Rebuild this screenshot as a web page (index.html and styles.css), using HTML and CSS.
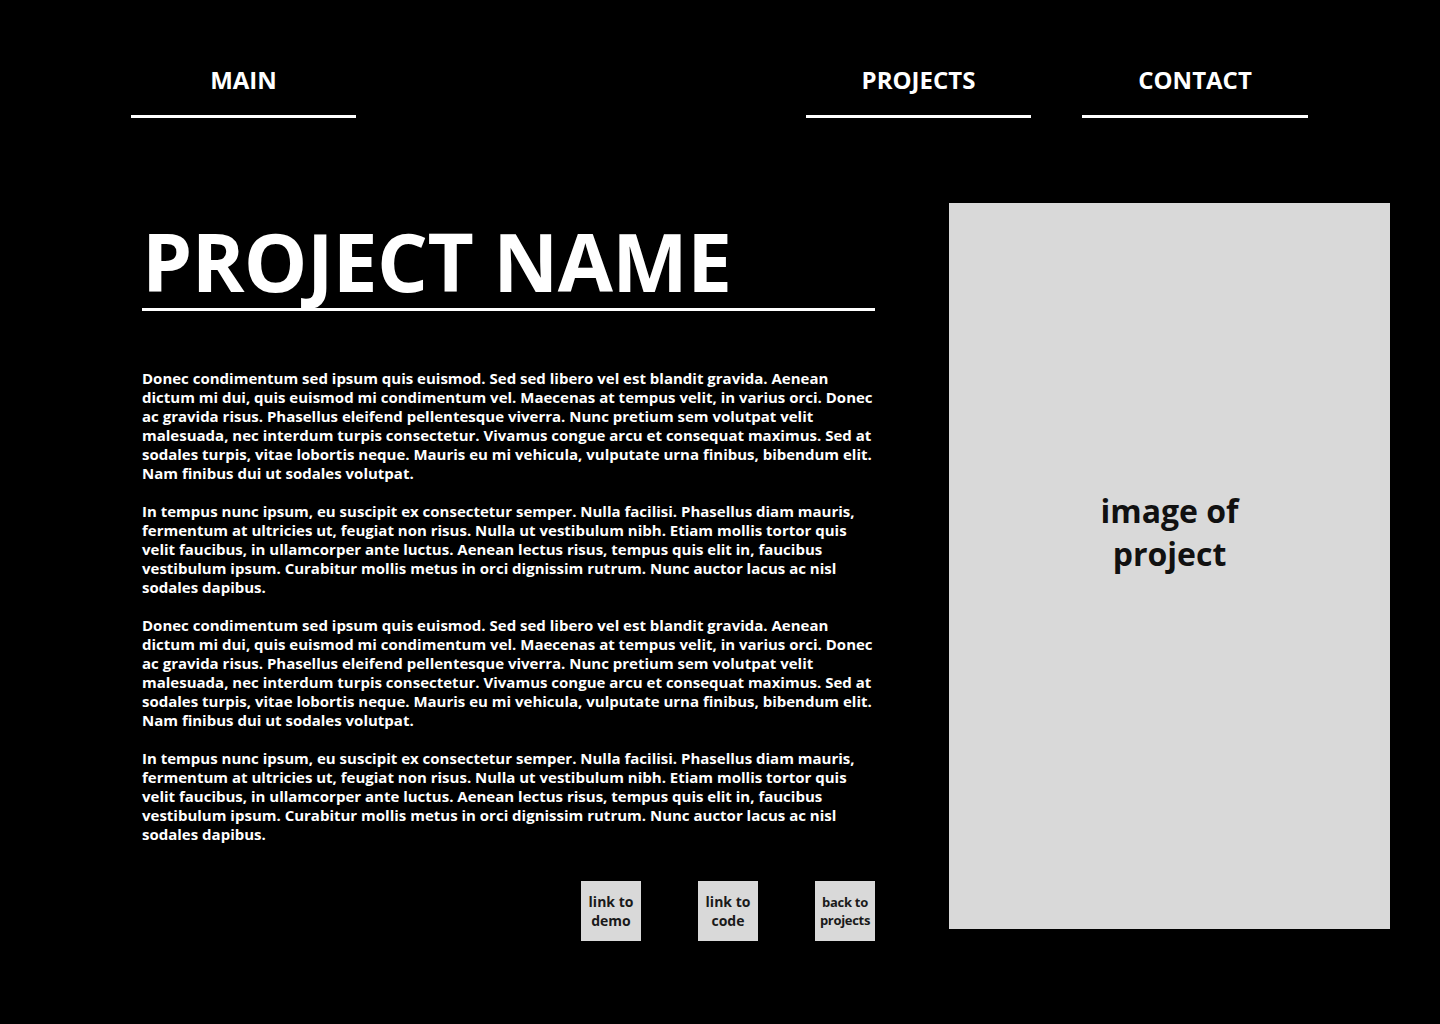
FILE: index.html
```html
<!DOCTYPE html>
<html lang="en">
<head>
<meta charset="utf-8">
<title>Project</title>
<link rel="stylesheet" href="styles.css">
</head>
<body>
<nav class="nav">
  <a class="nav-item" href="#">MAIN</a>
  <div class="nav-right">
    <a class="nav-item" href="#">PROJECTS</a>
    <a class="nav-item nav-item-wide" href="#">CONTACT</a>
  </div>
</nav>
<main class="content">
  <section class="text-col">
    <h1 class="title">PROJECT NAME</h1>
    <div class="body-text">
      <p>Donec condimentum sed ipsum quis euismod. Sed sed libero vel est blandit gravida. Aenean dictum mi dui, quis euismod mi condimentum vel. Maecenas at tempus velit, in varius orci. Donec ac gravida risus. Phasellus eleifend pellentesque viverra. Nunc pretium sem volutpat velit malesuada, nec interdum turpis consectetur. Vivamus congue arcu et consequat maximus. Sed at sodales turpis, vitae lobortis neque. Mauris eu mi vehicula, vulputate urna finibus, bibendum elit. Nam finibus dui ut sodales volutpat.</p>
      <p>In tempus nunc ipsum, eu suscipit ex consectetur semper. Nulla facilisi. Phasellus diam mauris, fermentum at ultricies ut, feugiat non risus. Nulla ut vestibulum nibh. Etiam mollis tortor quis velit faucibus, in ullamcorper ante luctus. Aenean lectus risus, tempus quis elit in, faucibus vestibulum ipsum. Curabitur mollis metus in orci dignissim rutrum. Nunc auctor lacus ac nisl sodales dapibus.</p>
      <p>Donec condimentum sed ipsum quis euismod. Sed sed libero vel est blandit gravida. Aenean dictum mi dui, quis euismod mi condimentum vel. Maecenas at tempus velit, in varius orci. Donec ac gravida risus. Phasellus eleifend pellentesque viverra. Nunc pretium sem volutpat velit malesuada, nec interdum turpis consectetur. Vivamus congue arcu et consequat maximus. Sed at sodales turpis, vitae lobortis neque. Mauris eu mi vehicula, vulputate urna finibus, bibendum elit. Nam finibus dui ut sodales volutpat.</p>
      <p>In tempus nunc ipsum, eu suscipit ex consectetur semper. Nulla facilisi. Phasellus diam mauris, fermentum at ultricies ut, feugiat non risus. Nulla ut vestibulum nibh. Etiam mollis tortor quis velit faucibus, in ullamcorper ante luctus. Aenean lectus risus, tempus quis elit in, faucibus vestibulum ipsum. Curabitur mollis metus in orci dignissim rutrum. Nunc auctor lacus ac nisl sodales dapibus.</p>
    </div>
    <div class="buttons">
      <a class="btn" href="#">link to demo</a>
      <a class="btn" href="#">link to code</a>
      <a class="btn btn-small" href="#">back to projects</a>
    </div>
  </section>
  <aside class="image-box">
    <span class="image-label">image of<br>project</span>
  </aside>
</main>
</body>
</html>
```

FILE: styles.css
```css
* { box-sizing: border-box; }
html, body {
  margin: 0;
  padding: 0;
  background: #000;
}
body {
  width: 1440px;
  height: 1024px;
  color: #fff;
  font-family: "Open Sans", "Noto Sans", sans-serif;
  font-weight: 700;
  overflow: hidden;
}
a { color: inherit; text-decoration: none; }

.nav {
  display: flex;
  justify-content: space-between;
  padding: 0 132px 0 131px;
}
.nav-right {
  display: flex;
  gap: 51px;
}
.nav-item {
  display: block;
  width: 225px;
  padding-top: 62px;
  height: 118px;
  border-bottom: 3px solid #fff;
  text-align: center;
  font-size: 24px;
  line-height: 36px;
}
.nav-item-wide {
  width: 226px;
}

.content {
  display: flex;
  gap: 74px;
  padding: 85px 50px 0 142px;
}
.text-col {
  width: 733px;
  display: flex;
  flex-direction: column;
}
.title {
  margin: 0;
  padding-top: 10px;
  font-size: 80px;
  line-height: 96px;
  font-weight: 700;
  letter-spacing: -0.6px;
  border-bottom: 3px solid #fff;
  height: 108px;
}
.body-text {
  margin-top: 58px;
  font-size: 15px;
  line-height: 19px;
  width: 733px;
}
.body-text p {
  margin: 0 0 19px 0;
}
.buttons {
  display: flex;
  justify-content: flex-end;
  gap: 57px;
  margin-top: 18px;
}
.btn {
  width: 60px;
  height: 60px;
  background: #d9d9d9;
  color: #1a1a1a;
  display: flex;
  align-items: center;
  justify-content: center;
  text-align: center;
  font-size: 14px;
  line-height: 19px;
}
.btn-small {
  font-size: 13px;
  line-height: 18px;
  letter-spacing: -0.3px;
}
.image-box {
  width: 441px;
  height: 726px;
  background: #d9d9d9;
  display: flex;
  align-items: center;
  justify-content: center;
  color: #111;
}
.image-label {
  text-align: center;
  font-size: 32px;
  line-height: 43px;
  margin-bottom: 68px;
}
```
